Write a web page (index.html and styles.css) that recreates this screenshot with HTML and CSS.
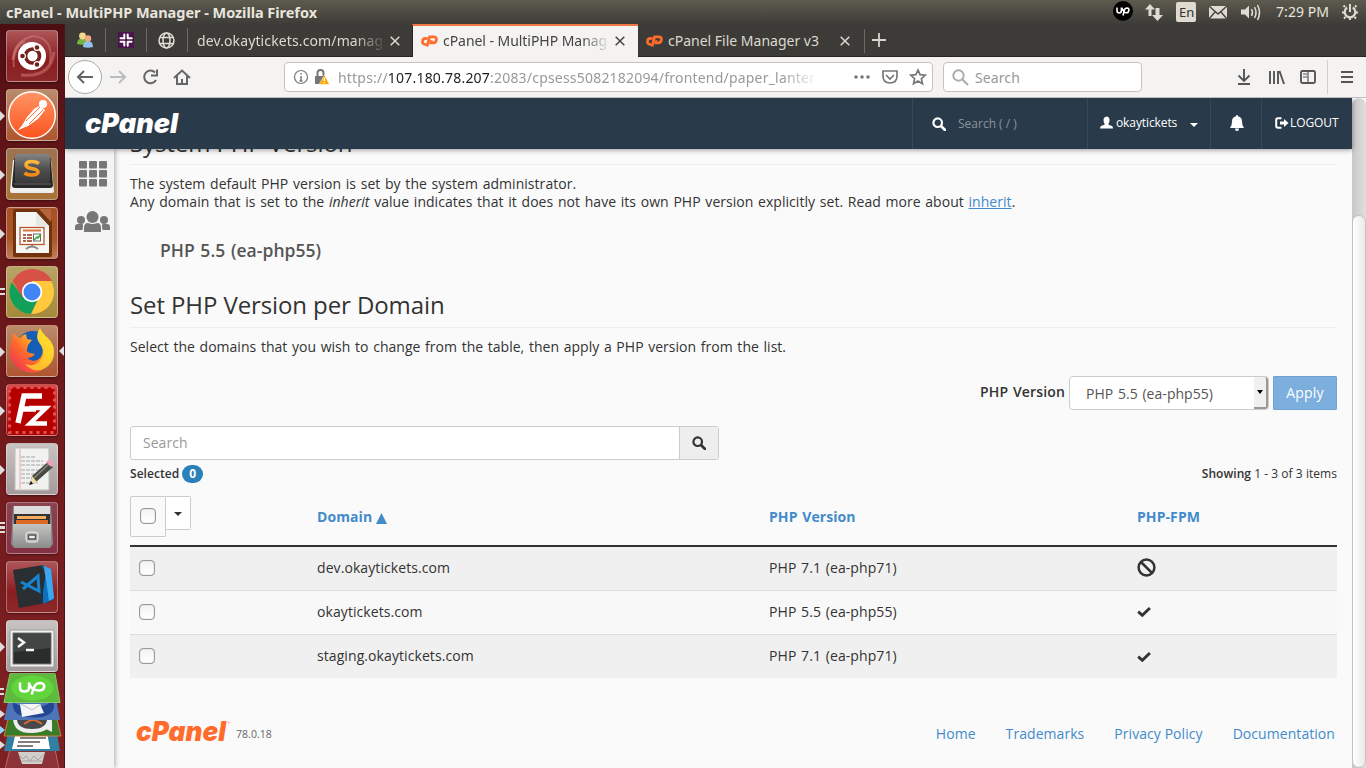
FILE: index.html
```html
<!DOCTYPE html>
<html lang="en">
<head>
<meta charset="utf-8">
<title>cPanel - MultiPHP Manager</title>
<link rel="stylesheet" href="styles.css">
</head>
<body>
<svg width="0" height="0" class="defs">
  <defs>
    <linearGradient id="orange" x1="0" y1="0" x2="0" y2="1"><stop offset="0" stop-color="#ff9565"/><stop offset="1" stop-color="#fb531e"/></linearGradient>
    <linearGradient id="gold" x1="0" y1="0" x2="0" y2="1"><stop offset="0" stop-color="#ffb83c"/><stop offset="1" stop-color="#f28a12"/></linearGradient>
    <linearGradient id="key" x1="0" y1="0" x2="0" y2="1"><stop offset="0" stop-color="#858585"/><stop offset=".5" stop-color="#505050"/><stop offset="1" stop-color="#3a3a3a"/></linearGradient>
    <linearGradient id="fox" x1="1" y1="0" x2="0" y2="1"><stop offset="0" stop-color="#fff24a"/><stop offset=".35" stop-color="#ffba25"/><stop offset=".6" stop-color="#ff6b2c"/><stop offset="1" stop-color="#e8255e"/></linearGradient>
    <linearGradient id="steel" x1="0" y1="0" x2="0" y2="1"><stop offset="0" stop-color="#c4c4c2"/><stop offset="1" stop-color="#8c8c8a"/></linearGradient>
    <symbol id="cp" viewBox="0 0 17 12"><path d="M6.500 3.400H4.600Q1.700 3.400 1.500 6.300T4 9.300h1M6 11.500 8.600 1.800h4.200q3 0 2.600 3T12.200 8H10L10.700 5.400" fill="none" stroke="#ff6c2c" stroke-width="2.700"/></symbol>
    <symbol id="close" viewBox="0 0 10 10"><path d="M.7.7l8.600 8.600M9.300.7.7 9.300" stroke="currentColor" stroke-width="1.500"/></symbol>
    <symbol id="mag" viewBox="0 0 14 14"><circle cx="5.700" cy="5.700" r="4.300" fill="none" stroke="currentColor" stroke-width="2.200"/><path d="M9 9l4 4" stroke="currentColor" stroke-width="2.600" stroke-linecap="round"/></symbol>
    <symbol id="check" viewBox="0 0 14 11"><path d="M1.200 5.600 5.300 9.300 12.900 2" fill="none" stroke="#333" stroke-width="2.900"/></symbol>
  </defs>
</svg>

<div class="desktop">
  <header class="panel">
    <span class="window-title">cPanel - MultiPHP Manager - Mozilla Firefox</span>
    <div class="indicators">
      <svg width="254" height="24" viewBox="0 0 254 24">
        <circle cx="11" cy="11" r="10" fill="#000"/>
        <path d="M5 7.500v3q0 2.500 2.200 2.500t2.200-2.500v-3M11 15.500l1.200-5q.6-2.500 3-2.500 2 .3 1.700 2.500-.5 2.300-2.500 2.300-1.700 0-2.600-1.500-1.500-1.500-2-3.500" fill="none" stroke="#fff" stroke-width="1.600"/>
        <g fill="#dfdbd2"><path d="M36.500 16V9.500H33L38 4l5 5.500h-3.500V16zM43.500 8h4v7h3.500l-5.500 6-5.500-6h3.500z"/><rect x="64" y="2" width="20" height="20" rx="2"/><rect x="97" y="6" width="18" height="12.500"/><path d="M129 9.500h4l4-4v13l-4-4h-4z"/></g>
        <text x="67" y="17" class="lang">En</text>
        <path d="M97 6l9 8 9-8M97 19l6-7M115 19l-6-7" stroke="#444239" stroke-width="1.400" fill="none"/>
        <g fill="none" stroke="#dfdbd2" stroke-width="1.500"><path d="M139.500 9q2 3.500 0 7M142.500 7q3 5.500 0 11M145.500 5q4 7.500 0 15"/><path d="M235.200 7.500a5.300 5.300 0 1 0 5.600 0" stroke-width="2.200"/><path d="M238 4v8M243 7l1.500-1.500M244 12.500h2M242.500 17l1.500 1.500M238 18v2M233.500 17 232 18.500M232 12.500h-2M233 7l-1.500-1.500" stroke-width="2"/></g>
        <text x="164" y="17" class="clock" textLength="53">7:29 PM</text>
      </svg>
    </div>
  </header>

  <aside class="launcher">
    <div class="tile t-red"><svg viewBox="0 0 52 52"><g fill="none" stroke="#d98a88" stroke-opacity=".45"><path d="M8 37Q4 12 27 6 48 8 44 33" stroke-width="2"/><path d="M15 45Q45 48 48 22M7 30Q9 15 19 11" stroke-width="3"/></g><circle cx="26" cy="26" r="14" fill="#fff"/><circle cx="26.500" cy="26" r="7" fill="none" stroke="#75201d" stroke-width="3.600"/><g fill="#75201d" stroke="#fff" stroke-width="1.200"><circle cx="16.500" cy="26" r="2.900"/><circle cx="31" cy="17.500" r="2.900"/><circle cx="31" cy="34.500" r="2.900"/></g></svg></div>
    <div class="tile t-orange run"><svg viewBox="0 0 52 52"><circle cx="26" cy="26" r="23.300" fill="url(#orange)" stroke="#fff" stroke-width="1.400"/><g fill="#fff"><circle cx="37" cy="15" r="4"/><path d="M34 17l5 4-7 9-10 7-8 3 7-12 8-9z"/><path d="M20 32l3 3-8 5-3 1z"/></g><path d="M34 18 20 32M37 21 23 35" stroke="#ff713a" stroke-width="1"/></svg></div>
    <div class="tile t-brown run"><svg viewBox="0 0 52 52"><path d="M7 12h38l3 31q0 2-2 2H6q-2 0-2-2z" fill="#eee"/><path d="M6 37l2-22q0-9 5-9h27q5 0 5 9l2 22q0 3-3 3H9q-3 0-3-3z" fill="#282828"/><rect x="9" y="6" width="35" height="29" rx="3" fill="url(#key)"/><path d="M33 15.500q-3-2-7-2-6 0-6 3.500 0 2.500 5.500 3.500 6.500 1 6.500 3.500 0 3-7 3-4 0-6.500-2" fill="none" stroke="url(#gold)" stroke-width="3.600"/><path d="M8 36h37" stroke="#666"/></svg></div>
    <div class="tile t-rust run"><svg viewBox="0 0 52 52"><path d="M8 2h27l11 12v34q0 2-2 2H9q-2 0-2-2V4z" fill="#70330e"/><path d="M33 2l12 13V2z" fill="#b5653c"/><path d="M10 5h20l13 14v27H10z" fill="#f6f6f4"/><path d="M30 5v14h13z" fill="#e7e7e5"/><rect x="14" y="20.500" width="24" height="17" fill="#fff" stroke="#b6572b" stroke-width="1.300"/><path d="M17 23.500h18" stroke="#d57538" stroke-width="2"/><path d="M17 28h3m1 0h5m-9 3h3m1 0h5m-9 3h3m1 0h5" stroke="#8e3210" stroke-width="1.500"/><rect x="27.500" y="27" width="7" height="7" fill="#fff" stroke="#666"/><path d="M28 33l3-3 1 1 3-4" stroke="#38a634" stroke-width="1.500" fill="none"/><path d="M20 42q6-5 12 0M26 38v2" stroke="#888" stroke-width="2" fill="none"/></svg></div>
    <div class="tile t-olive run2"><svg viewBox="0 0 52 52"><circle cx="26" cy="26" r="22" fill="#ffc83d"/><path d="M6 16A22 22 0 0 0 25 48L33 31 26 36 17 31z" fill="#129f59"/><path d="M26 15h20A22 22 0 0 0 6.500 15.500L17 32z" fill="#d85147"/><circle cx="26" cy="26" r="10.200" fill="#fff"/><circle cx="26" cy="26" r="8.500" fill="#4285f4"/></svg></div>
    <div class="tile t-orange run focus"><svg viewBox="0 0 52 52"><circle cx="27" cy="23" r="17" fill="#165db5"/><path d="M8 8q3 5 6 5 2-3 6-4l1 5 5 1-4 5-1 4q-1 3 3 4l5 1q-3 4-8 4 7 6 13 0 5-5 1-13-5-6-3-13 2-4 2-4 2 5 8 10 8 8 5 18A22 22 0 0 1 4 29q0-12 4-21z" fill="url(#fox)"/><path d="M34 4q-6 8 0 15 6 6 2 14-6 10-17 6 10 11 22 3 10-8 6-21-2-5-7-9-4-3-6-8z" fill="#ffdb2c" opacity=".72"/></svg></div>
    <div class="tile t-fz run"><svg viewBox="0 0 52 52"><rect x="3.500" y="3.500" width="45" height="45" fill="#b60000" stroke="#de5450" stroke-width="3" stroke-dasharray="3 4"/><g fill="none" stroke="#fff"><path d="M12 39 18 12h18M15 25h15" stroke-width="5.500"/><path d="M23 24h17L24 39.500h17" stroke-width="4.500"/></g></svg></div>
    <div class="tile t-gray run"><svg viewBox="0 0 52 52"><path d="M9 5h34v42H9z" fill="#f1f2f0" stroke="#bdbdb8"/><path d="M14 6v40" stroke="#f2a6a6"/><g stroke="#a1a6aa"><path d="M15 14h15M15 18h22M15 22h24M15 27h21M15 31h16M15 35h19M15 40h17" stroke-dasharray="4 1"/></g><path d="M24 41l2-8 16-14 5 5-17 15z" fill="#494943"/><path d="M28 35 43 21" stroke="#898982" stroke-width="1.500"/><path d="M24 41l2-8 5 6z" fill="#eedf9b"/><path d="M40 19l3-3 5 5-3 3z" fill="#ef9fbd"/><path d="M23 42l2-4 2 3z" fill="#111"/></svg></div>
    <div class="tile t-mauve run3"><svg viewBox="0 0 52 52"><path d="M7 4h38l2 37q0 3-3 3H8q-3 0-3-3z" fill="#888"/><path d="M8 4h36v9H8z" fill="#ddd"/><path d="M8 12h36v12H8z" fill="#333"/><path d="M11 14h29v3H11z" fill="#f4ac5c"/><path d="M10 18h32v4H10z" fill="#dc6a24"/><path d="M7 22h38v22q0 2-2 2H9q-2 0-2-2z" fill="url(#steel)"/><rect x="20" y="30" width="12" height="10" rx="2.500" fill="#bbb" stroke="#eee"/><path d="M22.500 33h7v4h-7z" fill="#eee" stroke="#555" stroke-width="1.500"/></svg></div>
    <div class="tile t-red"><svg viewBox="0 0 52 52"><path d="M7 9 37 4l7 37-31 6z" fill="#292e32"/><path d="M35 4l10 4 3 30-11 5V31l3-20z" fill="#0b70bd"/><path d="M38 5l7 3 3 29-5 3z" fill="#3aa8ee"/><path d="M15 21l18 9-1-15-15 13" stroke="#1684ce" stroke-width="3" fill="none"/></svg></div>
    <div class="tile t-gray run"><svg viewBox="0 0 52 52"><rect x="4" y="10" width="44" height="37" rx="1" fill="#f1f1ef" stroke="#999"/><rect x="7" y="13" width="38" height="31" fill="#2b2d2c" stroke="#777"/><path d="M8 14h36v14L8 32z" fill="#434544"/><path d="M12 18l6 4.500-6 4.500M20 30h8" fill="none" stroke="#f4f4f4" stroke-width="2.500"/></svg></div>
    <svg class="folded" viewBox="0 0 65 96">
      <path d="M0 15h4v2H0zM0 20h4v2H0zM0 37l5 4-5 4zM0 68l5 4-5 4z" fill="#ddd"/><path d="M0 53l5 4-5 4z" fill="#8fd8ff"/>
      <path d="M10 76h45l4 20H5z" fill="#8c3337" stroke="#b4686a"/><path d="M18 79h27l-3 12H22z" fill="#d1cfcc"/><path d="M19 82l4 4 3-3 4 5 4-5 4 4 5-5M22 88h20" stroke="#a7a5a1" fill="none"/>
      <path d="M9 55h47l4 23H4z" fill="#327fa4"/><path d="M16 59h31l3 17H12z" fill="#fff"/><path d="M20 65h26M18 69h22M17 73h16" stroke="#555" stroke-width="1.500"/>
      <path d="M9 42h47l5 21H4z" fill="#397c2a" stroke="#cc7c33" stroke-width="1"/><path d="M13 46h39q0 13-19 14T13 46z" fill="#eee"/><path d="M17 46h30q0 10-15 10T17 46z" fill="#464849"/><path d="M42 54l10-6v11z" fill="#eee"/><path d="M24 51l7-4h4l7 4" stroke="#e36b31" stroke-width="2" fill="none"/>
      <path d="M9 25h47l4 22H4z" fill="#4e75b9"/><path d="M13 29q21 14 40-2 5 13-11 17-17 2-26-4-4-5-3-11z" fill="#244693"/><path d="M20 31h20l4 9-22 4z" fill="#f4f5f7"/><path d="M21 31l11 6 9-6" stroke="#bbb" fill="none"/>
      <path d="M10 .5h45l5 29H4z" fill="#5dba3d" stroke="#88c773"/><ellipse cx="32.500" cy="15" rx="21" ry="12.500" fill="#62d53c"/><path d="M20 9.500v5q0 4 4.500 4t4.500-4v-5q1 5 5.500 7.500M31.500 21.500l3-8q1.500-3.500 6-3.500 4 .5 3.700 4-.7 3.500-5 3.500-3 0-4.700-1" fill="none" stroke="#fff" stroke-width="2.500"/>
    </svg>
  </aside>

  <div class="browser">
    <nav class="tabs">
      <div class="pin"><svg width="18" height="18" viewBox="0 0 18 18"><path d="M1 13q0-5.500 5-5.500t5 5.500q-5 1.500-10 0z" fill="#74b63c"/><circle cx="6.500" cy="5" r="3.400" fill="#f6d98f"/><path d="M7 16q0-6 5-6t5 6q-5 1.500-10 0z" fill="#92c0f0"/><circle cx="12" cy="7.500" r="3.200" fill="#f4a985"/></svg></div>
      <div class="pin"><svg width="16" height="16" viewBox="0 0 16 16"><path d="M0 0h16v16H0z" fill="#4a154b"/><path d="M6.300 2.500v4M9.700 2.500v3.500M6.300 10.500v3M9.700 9.700v4M2.500 6.300h3.500M9.700 6.300h4M2.500 9.700h4M10.500 9.700h3" stroke="#fff" stroke-width="2" stroke-linecap="round"/></svg></div>
      <div class="pin"><svg width="17" height="17" viewBox="0 0 17 17" fill="none" stroke="#e0ddd5" stroke-width="1.500"><circle cx="8.500" cy="8.500" r="7.500"/><ellipse cx="8.500" cy="8.500" rx="3.500" ry="7.500"/><path d="M2 5.500h13M2 11.500h13"/></svg></div>
      <div class="tab first"><span class="label fade-dark ls1">dev.okaytickets.com/manag</span><svg class="x"><use href="#close"/></svg></div>
      <div class="tab active"><svg class="cp"><use href="#cp"/></svg><span class="label fade-light ls2">cPanel - MultiPHP Manag</span><svg class="x"><use href="#close"/></svg></div>
      <div class="tab last"><svg class="cp"><use href="#cp"/></svg><span class="label ls3">cPanel File Manager v3</span><svg class="x"><use href="#close"/></svg></div>
      <svg class="plus" width="14" height="14" viewBox="0 0 14 14"><path d="M7 0v14M0 7h14" stroke="#d8d5cd" stroke-width="1.800"/></svg>
    </nav>

    <div class="toolbar">
      <svg class="navbtns" width="135" height="40" viewBox="0 0 135 40" fill="none" stroke="#666" stroke-width="2"><circle cx="20" cy="20" r="16.500" fill="#fff" stroke="#aaa" stroke-width="1"/><path d="M13 20h15M19 14l-6 6 6 6"/><path d="M45 20h15M54 14l6 6-6 6" stroke="#bbb"/><path d="M90 15.500A6.300 6.300 0 1 0 91 23M92 12.500v6h-6"/><path d="M109 21l8-7.500 8 7.500M112 19v8h10v-8M117 27v-5" /></svg>
      <div class="urlbar">
        <svg width="36" height="22" viewBox="0 0 36 22"><circle cx="8" cy="11" r="6.500" fill="none" stroke="#777" stroke-width="1.200"/><path d="M8 7v1.500M8 10v5M6.500 15h3" stroke="#777" stroke-width="1.500"/><path d="M24.500 10V7q0-3 3-3t3 3v3" fill="none" stroke="#777" stroke-width="2"/><path d="M22 10h10v8H22z" fill="#777"/><path d="M31.500 9l5 9.500H26z" fill="#ffa900" stroke="#fff" stroke-width=".5"/><path d="M31.300 12v3M31.300 16v1.300" stroke="#fff" stroke-width="1.400"/></svg>
        <span class="url">https://<b>107.180.78.207</b>:2083/cpsess5082182094/frontend/paper_lanter</span>
        <svg class="urlicons" width="75" height="20" viewBox="0 0 75 20"><g fill="#777"><circle cx="3" cy="10" r="1.800"/><circle cx="9" cy="10" r="1.800"/><circle cx="15" cy="10" r="1.800"/></g><g fill="none" stroke="#777" stroke-width="1.700"><path d="M30 4h14v5q0 7-7 7t-7-7zM33 8l4 4 4-4"/><path d="M65 3l2.100 4.700 5.100.5-3.800 3.500 1.100 5-4.500-2.600-4.500 2.600 1.100-5-3.800-3.500 5.100-.5z"/></g></svg>
      </div>
      <div class="searchbar"><svg width="17" height="17" viewBox="0 0 17 17" fill="none" stroke="#aaa" stroke-width="1.900"><circle cx="6.500" cy="6.500" r="5.200"/><path d="M10.500 10.500l5.500 5.500"/></svg><span>Search</span></div>
      <svg class="tools" width="129" height="40" viewBox="0 0 129 40" fill="none" stroke="#555" stroke-width="1.900"><path d="M14 12v12M8.500 18.500 14 24l5.500-5.500M8 27h12M40 14v13M44 14v13M48 14v13M49.500 14l4.500 13"/><rect x="71" y="14" width="14" height="12" rx="1.500"/><path d="M78 14v12M73 17h4M73 20h4" stroke-width="1.200"/><path d="M97.500 3v34" stroke="#d2d0cd" stroke-width="1"/><path d="M111 15h12M111 20h12M111 25h12"/></svg>
    </div>

    <div class="page">
      <div class="cp-header">
        <svg class="logo" width="100" height="36" viewBox="0 0 100 36"><text x="1" y="24" class="wordmark white" textLength="93" lengthAdjust="spacingAndGlyphs">cPanel</text></svg>
        <div class="cp-search"><svg class="i14"><use href="#mag"/></svg><span>Search ( / )</span></div>
        <div class="cp-user"><svg width="13" height="13" viewBox="0 0 13 13"><path d="M6.500.5Q9.500.5 9.500 4T8 8q.5 1 4 2 1 .5 1 2.500H0Q0 10.500 1 10q3.500-1 4-2Q3.500 7 3.500 4t3-3.500z" fill="#fff"/></svg><span>okaytickets</span><i class="caret"></i></div>
        <div class="cp-bell"><svg width="14" height="16" viewBox="0 0 14 16"><path d="M7 0q1 0 1 1.200Q12 2 12 6.500 12 11 14 13H0q2-2 2-6.500Q2 2 6 1.200 6 0 7 0zM5 13.500h4Q9 16 7 16t-2-2.500z" fill="#fff"/></svg></div>
        <div class="cp-logout"><svg width="14" height="12" viewBox="0 0 14 12"><path d="M6.500 1.200H3Q1.200 1.200 1.200 3v6q0 1.800 1.800 1.800h3.500" fill="none" stroke="#fff" stroke-width="2"/><path d="M5 4.500h4V2l4.500 4L9 10V7.500H5z" fill="#fff"/></svg><span>LOGOUT</span></div>
      </div>
      <div class="scroll-col"><div class="thumb"></div></div>
      <div class="side">
        <svg width="28" height="26" viewBox="0 0 28 26" fill="#777"><rect width="8" height="7.400" rx="1"/><rect x="10" width="8" height="7.400" rx="1"/><rect x="20" width="8" height="7.400" rx="1"/><rect y="9" width="8" height="7.400" rx="1"/><rect x="10" y="9" width="8" height="7.400" rx="1"/><rect x="20" y="9" width="8" height="7.400" rx="1"/><rect y="18" width="8" height="7.400" rx="1"/><rect x="10" y="18" width="8" height="7.400" rx="1"/><rect x="20" y="18" width="8" height="7.400" rx="1"/></svg>
        <svg width="35" height="22" viewBox="0 0 35 22" fill="#777"><circle cx="6" cy="9" r="4"/><circle cx="29" cy="9" r="4"/><path d="M0 19v-3q0-3 3-3h4q1.500 0 1 2l-.5 4zM27.500 19l-.5-4q-.5-2 1-2h4q3 0 3 3v3z"/><circle cx="17.500" cy="6" r="6"/><path d="M9 21v-4q0-5 4-5 4.500 2 9 0 4 0 4 5v4z" /></svg>
      </div>
      <main>
        <h2 class="top">System PHP Version</h2>
        <p class="intro">The system default PHP version is set by the system administrator.<br>Any domain that is set to the <em>inherit</em> value indicates that it does not have its own PHP version explicitly set. Read more about <a class="u">inherit</a>.</p>
        <div class="current">PHP 5.5 (ea-php55)</div>
        <h2>Set PHP Version per Domain</h2>
        <p class="hint">Select the domains that you wish to change from the table, then apply a PHP version from the list.</p>
        <div class="apply-row"><label>PHP Version</label><div class="select"><span>PHP 5.5 (ea-php55)</span><b><i class="caret"></i></b></div><button>Apply</button></div>
        <div class="filter"><div class="field">Search</div><div class="go"><svg class="i14"><use href="#mag"/></svg></div></div>
        <div class="counts"><div><strong>Selected</strong><span class="badge">0</span></div><div><strong>Showing</strong> 1 - 3 of 3 items</div></div>
        <div class="row head"><div class="all"><div class="allbox"><i class="cb"></i></div><div class="drop"><i class="caret"></i></div></div><div>Domain <svg width="11" height="11" viewBox="0 0 11 11"><path d="M5.500 0 11 11H0z" fill="#428bca"/></svg></div><div>PHP Version</div><div>PHP-FPM</div></div>
        <div class="row odd"><div><i class="cb"></i></div><div>dev.okaytickets.com</div><div>PHP 7.1 (ea-php71)</div><div><svg class="ban" width="19" height="19" viewBox="0 0 19 19" fill="none" stroke="#333" stroke-width="2.500"><circle cx="9.500" cy="9.500" r="7.900"/><path d="M4 4l11 11"/></svg></div></div>
        <div class="row"><div><i class="cb"></i></div><div>okaytickets.com</div><div>PHP 5.5 (ea-php55)</div><div><svg class="check"><use href="#check"/></svg></div></div>
        <div class="row odd"><div><i class="cb"></i></div><div>staging.okaytickets.com</div><div>PHP 7.1 (ea-php71)</div><div><svg class="check"><use href="#check"/></svg></div></div>
        <footer><svg width="98" height="36" viewBox="0 0 98 36"><text x="0" y="26" class="wordmark coral" textLength="90" lengthAdjust="spacingAndGlyphs">cPanel</text><circle cx="93" cy="7.500" r="1" fill="#ffb18f"/></svg><span class="ver">78.0.18</span><nav><a>Home</a><a>Trademarks</a><a>Privacy Policy</a><a>Documentation</a></nav></footer>
      </main>
    </div>
  </div>
</div>
</body>
</html>
```
FILE: styles.css
```css
* { box-sizing: border-box; }
body { margin: 0; width: 1366px; height: 768px; overflow: hidden; font: 14px/18px "Open Sans", sans-serif; color: #333; }
svg { display: block; flex: none; }
.defs { position: absolute; }
.desktop { display: grid; grid-template: 24px 744px / 65px 1301px; }
.panel { grid-column: 1 / 3; display: flex; justify-content: space-between; background: linear-gradient(#5d5a4f, #3d3c38); color: #e8e5dd; font-family: "Noto Sans", sans-serif; }
.window-title { font-weight: 700; font-size: 14.500px; line-height: 24px; padding-left: 6px; letter-spacing: -.04px; }
.lang { font: 13px "Noto Sans", sans-serif; fill: #33322d; }
.clock { font: 14px "Noto Sans", sans-serif; fill: #e8e5dd; }

.launcher { background: linear-gradient(#4c0d12, #5e1418 12%, #6a171a 35%, #7d2022 90%); border-right: 1px solid #4b1518; padding: 6px 0 0 6px; display: flex; flex-direction: column; gap: 7px; overflow: hidden; }
.tile { width: 52px; height: 52px; border-radius: 4px; border: 1px solid #ffffff55; position: relative; flex: none; box-shadow: 0 1px 2px #0006; }
.tile > svg { width: 52px; height: 52px; margin: -1px; }
.t-red { background: linear-gradient(#ad5558, #8a1d22 60%, #8b2929); }
.t-orange { background: linear-gradient(#ba8b6a, #ae5630); }
.t-brown { background: linear-gradient(#9d7352, #a97338); }
.t-rust { background: linear-gradient(#a95128, #a95628 60%, #c17955); }
.t-olive { background: linear-gradient(#b8a467, #a68a3a); }
.t-fz { background: linear-gradient(#d54848, #a90000); }
.t-gray { background: linear-gradient(#c9c3c4, #a59a9b); }
.t-mauve { background: linear-gradient(#8b4350, #833144); }
.run::before, .run2::before, .run3::before { content: ""; position: absolute; left: -7px; top: 21px; border: 5px solid transparent; border-left-color: #ddd; border-right: 0; }
.run2::before, .run3::before { border: 0; width: 5px; height: 7px; background: repeating-linear-gradient(#ddd 0 2px, transparent 2px 5px); }
.run3::before { height: 12px; top: 19px; background: repeating-linear-gradient(#ddd 0 2px, transparent 2px 4.500px); }
.focus::after { content: ""; position: absolute; right: -7px; top: 20px; border: 5px solid transparent; border-right-color: #ddd; border-left: 0; }
.folded { width: 65px; height: 96px; margin: -6px 0 0 -6px; }

.browser { display: grid; grid-template-rows: 33px 41px 670px; min-width: 0; }
.tabs { display: flex; background: #3c3b37; border-bottom: 1px solid #262522; font: 14px/32px "Noto Sans", sans-serif; color: #dcd9d1; }
.pin { width: 41px; display: flex; align-items: center; justify-content: center; background: linear-gradient(#6b6a65, #6b6a65) right center / 1px 24px no-repeat; }
.pin svg { margin-right: 2px; }
.tab { display: flex; align-items: center; height: 33px; }
.first { width: 224px; padding: 0 12px 0 9px; }
.active { width: 226px; background: #f4f3f2; border-top: 2px solid #f07746; border-left: 1px solid #262522; color: #444; padding: 0 13px 2px 8px; }
.last { width: 227px; padding: 0 15px 0 8px; background: linear-gradient(#6b6a65, #6b6a65) right center / 1px 24px no-repeat; }
.cp { width: 17px; height: 12px; margin-right: 5px; }
.x { width: 10px; height: 10px; margin-left: auto; }
.label { white-space: nowrap; overflow: hidden; }
.ls1 { width: 190px; letter-spacing: .12px; }
.ls2 { width: 167px; letter-spacing: -.05px; }
.ls3 { letter-spacing: 0; }
.fade-dark, .fade-light { -webkit-mask-image: linear-gradient(90deg, #000 83%, transparent); mask-image: linear-gradient(90deg, #000 83%, transparent); }
.plus { margin: 9px 0 0 7px; }
.toolbar { display: flex; background: #f4f3f2; border-bottom: 1px solid #c2c0bd; font: 14px/30px "Noto Sans", sans-serif; }
.urlbar { margin: 5px 10px 0 84px; width: 649px; height: 30px; background: #fff; border: 1px solid #c6c3bf; border-radius: 4px; display: flex; align-items: center; padding-left: 8px; }
.url { width: 482px; padding-top: 1px; margin-left: 9px; letter-spacing: .2px; white-space: nowrap; overflow: hidden; color: #999; -webkit-mask-image: linear-gradient(90deg, #000 92%, transparent); mask-image: linear-gradient(90deg, #000 92%, transparent); }
.url b { font-weight: 400; color: #222; }
.urlicons { margin-left: 33px; }
.searchbar { margin-top: 5px; width: 199px; height: 30px; background: #fff; border: 1px solid #c6c3bf; border-radius: 4px; display: flex; align-items: center; gap: 6px; padding-left: 8px; color: #999; letter-spacing: .1px; }
.searchbar span { padding-top: 1px; }
.tools { margin-left: 88px; }

.page { display: grid; grid-template: 51px 619px / 49px 1238px 14px; background: #fafafa; overflow: hidden; }
.cp-header { grid-column: 1 / 3; background: #293a4a; display: flex; align-items: stretch; color: #fff; font-size: 12px; box-shadow: 0 1px 5px #0006; z-index: 2; }
.cp-header > div { display: flex; align-items: center; border-left: 1px solid #34495a; }
.logo { margin: 11px auto 0 19px; }
.wordmark { font: italic 900 27px Inter, "Open Sans", sans-serif; }
.white { fill: #fff; }
.coral { fill: #ff6c2c; }
.i14 { width: 14px; height: 14px; }
.cp-search { width: 175px; padding-left: 19px; gap: 12px; color: #8b949d; }
.cp-search svg { color: #fff; }
.cp-user { width: 123px; padding: 0 0 1px 12px; gap: 3px; letter-spacing: -.1px; }
.caret { border: 4px solid transparent; border-top-color: currentColor; border-bottom: 0; display: block; width: 0; height: 0; }
.cp-user svg, .cp-bell svg { margin-top: -1px; }
.cp-user .caret { margin: 3px 0 0 10px; }
.cp-bell { width: 51px; justify-content: center; padding: 0 0 1px 1px; }
.cp-logout { width: 91px; padding: 0 0 1px 13px; gap: 1px; letter-spacing: -.1px; }
.scroll-col { grid-row: 1 / 3; grid-column: 3; background: linear-gradient(90deg, #c8c8c8, #dedede); border-radius: 7px 7px 0 0; padding-top: 117px; }
.thumb { height: 553px; border: 1px solid #c5c2bd; border-radius: 7px; background: linear-gradient(90deg, #fff, #eceae8); }
.side { background: #f4f4f4; box-shadow: 1px 0 5px #0005; z-index: 1; padding: 12px 0 0 10px; }
.side svg:first-child { margin: 0 0 24px 4px; }
main { padding: 0 15px 0 16px; word-spacing: 1px; letter-spacing: .04px; }
h2 { margin: 0; font-size: 24px; line-height: 26px; font-weight: 400; height: 36px; border-bottom: 1px solid #eee; word-spacing: 0; letter-spacing: -.1px; }
.top { margin-top: -20px; line-height: 28px; }
p { margin: 0; }
.intro { padding-top: 10px; height: 76px; }
a { color: #428bca; }
.u { text-decoration: underline; }
.current { height: 51px; padding-left: 30px; font-size: 17.500px; font-weight: 600; color: #555; }
.hint { padding-top: 10px; height: 48px; letter-spacing: .02px; }
.apply-row { display: flex; justify-content: flex-end; height: 50px; }
.apply-row label { font-weight: 600; line-height: 32px; letter-spacing: .15px; }
.select { margin: 0 4px; width: 200px; height: 34px; border: 1px solid #ccc; border-radius: 4px; background: #fff; display: flex; justify-content: space-between; line-height: 34px; padding-left: 16px; color: #555; }
.select b { width: 14px; background: #f1f0ef; border-right: 2px solid #999; border-bottom: 2px solid #999; border-radius: 0 3px 3px 0; display: flex; align-items: center; justify-content: center; color: #000; }
.select .caret { border-width: 4px 3.500px 0; }
button { width: 64px; height: 34px; border: 1px solid #6ea2d4; background: #7cafdd; color: #fff; font: 14px "Open Sans", sans-serif; letter-spacing: .2px; border-radius: 1px; padding: 0 0 1px; }
.filter { width: 589px; height: 34px; border: 1px solid #ccc; border-radius: 3px; display: flex; line-height: 32px; background: #fff; color: #999; }
.field { flex: 1; padding-left: 12px; }
.go { width: 39px; border-left: 1px solid #ccc; background: #eee; color: #333; display: flex; align-items: center; justify-content: center; }
.counts { display: flex; justify-content: space-between; height: 36px; padding-top: 5px; font-size: 12px; word-spacing: 0; }
.counts strong { font-weight: 600; }
.badge { display: inline-block; width: 21px; height: 18px; border-radius: 9px; background: #2a80b9; color: #fff; font-weight: 700; text-align: center; margin-left: 3px; }
.row { display: grid; grid-template-columns: 187px 452px 368px 200px; height: 44px; align-items: center; border-bottom: 1px solid #ddd; background: #f8f8f8; padding-bottom: 2px; letter-spacing: .08px; }
.row > div:first-child { padding-left: 9px; }
.row:nth-last-child(2) { border-bottom: 0; height: 43px; padding-bottom: 1px; }
.odd { background: #f0f0f0; }
.head { height: 51px; background: none; border-bottom: 2px solid #333; color: #428bca; font-weight: 700; padding-bottom: 10px; }
.head svg { display: inline-block; vertical-align: -2px; margin-left: -1px; }
.cb { display: block; width: 16px; height: 16px; border: 1px solid #999; border-radius: 4px; background: linear-gradient(#f3f3f3, #fff); box-shadow: inset 0 0 1px #888; }
.head > .all:first-child { display: flex; padding: 0; color: #333; align-items: flex-start; align-self: start; }
.allbox { width: 36px; height: 41px; border: 1px solid #ccc; padding: 11px 0 0 9px; border-radius: 2px 0 0 2px; }
.drop { width: 25px; height: 34px; border: 1px solid #ccc; border-left: 0; background: #fff; padding: 15px 0 0 8px; border-radius: 0 2px 2px 0; }
.check { width: 14px; height: 11px; }
.ban { margin-top: -1px; }
footer { display: flex; align-items: center; padding: 0 2px 0 6px; margin-top: 38px; height: 36px; }
footer > svg { margin-top: -3px; }
.ver { font-size: 10.500px; color: #666; margin: 0 auto 0 2px; }
footer nav { display: flex; gap: 30px; letter-spacing: .06px; word-spacing: 0; }
```
